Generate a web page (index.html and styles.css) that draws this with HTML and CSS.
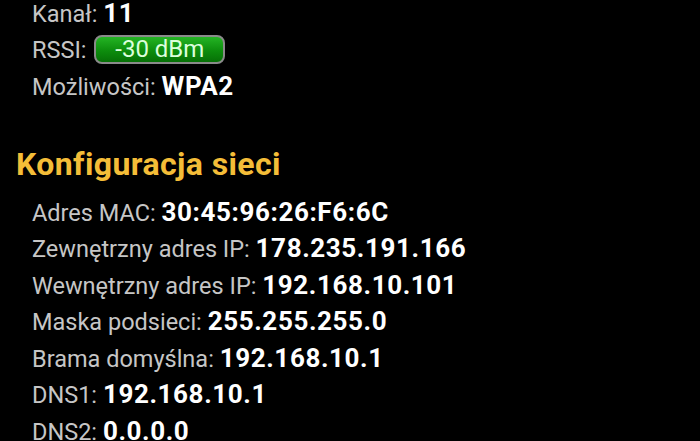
FILE: index.html
```html
<!DOCTYPE html>
<html lang="pl">
<head>
<meta charset="utf-8">
<link rel="stylesheet" href="styles.css">
</head>
<body>
<div class="page">
  <section class="group first">
    <div class="row"><span class="label">Kanał:</span> <span class="value">11</span></div>
    <div class="row"><span class="label">RSSI:</span> <span class="badge">-30 dBm</span></div>
    <div class="row"><span class="label">Możliwości:</span> <span class="value">WPA2</span></div>
  </section>
  <h2 class="heading">Konfiguracja sieci</h2>
  <section class="group">
    <div class="row"><span class="label">Adres MAC:</span> <span class="value">30:45:96:26:F6:6C</span></div>
    <div class="row"><span class="label">Zewnętrzny adres IP:</span> <span class="value">178.235.191.166</span></div>
    <div class="row"><span class="label">Wewnętrzny adres IP:</span> <span class="value">192.168.10.101</span></div>
    <div class="row"><span class="label">Maska podsieci:</span> <span class="value">255.255.255.0</span></div>
    <div class="row"><span class="label">Brama domyślna:</span> <span class="value">192.168.10.1</span></div>
    <div class="row"><span class="label">DNS1:</span> <span class="value">192.168.10.1</span></div>
    <div class="row"><span class="label">DNS2:</span> <span class="value">0.0.0.0</span></div>
  </section>
</div>
</body>
</html>
```
FILE: styles.css
```css
html, body {
  margin: 0;
  padding: 0;
  background: #000;
  height: 100%;
  overflow: hidden;
}
.page {
  font-family: Roboto, "Noto Sans", sans-serif;
  color: #c4c4c4;
  padding-left: 32px;
}
.group {
  display: flex;
  flex-direction: column;
}
.first {
  margin-top: -5px;
}
.row {
  height: 36.5px;
  line-height: 36.5px;
  font-size: 23.5px;
  white-space: nowrap;
}
.label {
  color: #c6c6c6;
}
.value {
  color: #fff;
  font-weight: bold;
  font-size: 26px;
  letter-spacing: 0.6px;
}
.badge {
  display: inline-block;
  vertical-align: middle;
  box-sizing: border-box;
  width: 131px;
  height: 29px;
  line-height: 25px;
  text-align: center;
  border: 2px solid #8a8a8a;
  border-radius: 8px;
  background: linear-gradient(#24b424, #0d8d0d 55%, #067006);
  color: #dcffdc;
  font-size: 24px;
  margin-left: 2px;
  position: relative;
  top: -2px;
}
.heading {
  margin: 39px 0 10px -16px;
  height: 40px;
  line-height: 40px;
  font-size: 32px;
  letter-spacing: 0.4px;
  font-weight: bold;
  color: #f4bd38;
}
```
